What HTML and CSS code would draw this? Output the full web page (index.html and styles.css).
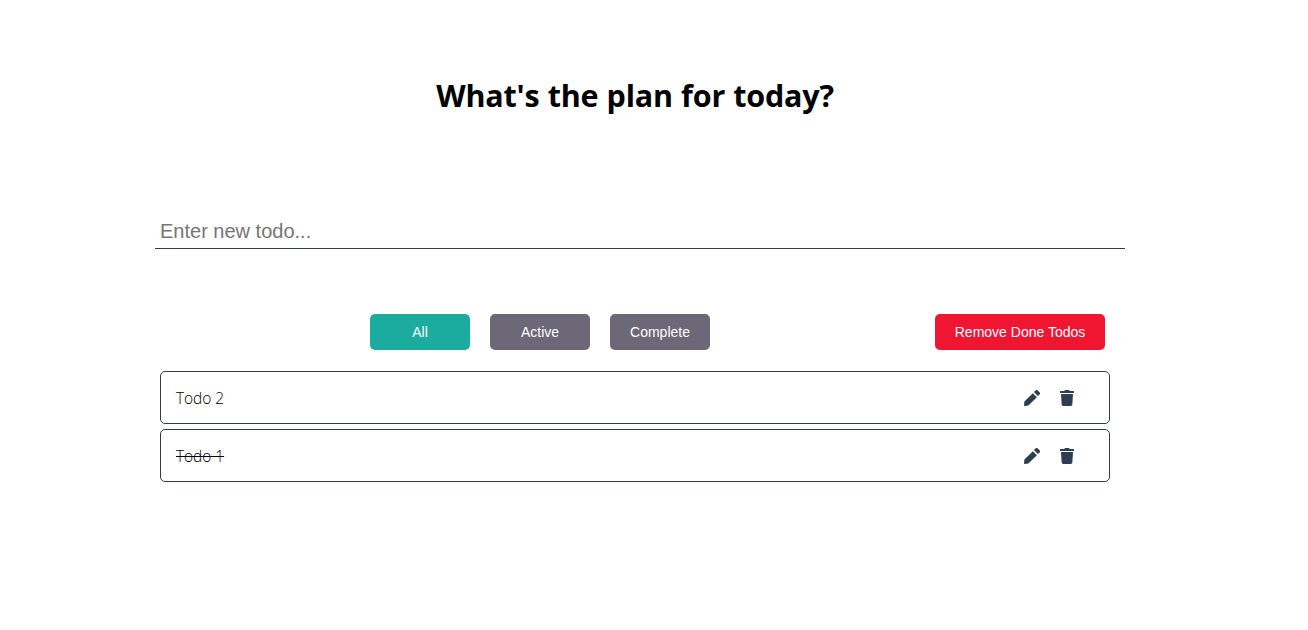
FILE: index.html
```html
<!DOCTYPE html>
<html lang="en">
<head>
<meta charset="utf-8">
<title>Todo List</title>
<link rel="stylesheet" href="styles.css">
</head>
<body>
<svg class="sprite" aria-hidden="true">
  <symbol id="pen" viewBox="0 0 512 512"><path d="M284 100l128 128-271.230 271.260-114.140 12.600C11.350 513.540-1.560 500.620.140 485.340l12.700-114.220zM497.940 74.180l-60.110-60.110c-18.750-18.750-49.160-18.750-67.910 0l-53 53 128.020 128.020 53-53c18.750-18.760 18.750-49.160 0-67.910z"/></symbol>
  <symbol id="trash" viewBox="0 0 448 512"><path d="M432 32H312l-9.4-18.7A24 24 0 0 0 281.1 0H166.8a23.72 23.72 0 0 0-21.4 13.3L136 32H16A16 16 0 0 0 0 48v32a16 16 0 0 0 16 16h416a16 16 0 0 0 16-16V48a16 16 0 0 0-16-16zM53.2 467a48 48 0 0 0 47.9 45h245.8a48 48 0 0 0 47.9-45L416 128H32z"/></symbol>
</svg>
<main class="app">
  <h1 class="title">What's the plan for today?</h1>
  <input class="todo-input" type="text" placeholder="Enter new todo...">
  <div class="toolbar">
    <div class="filters">
      <button class="btn btn-active">All</button>
      <button class="btn">Active</button>
      <button class="btn">Complete</button>
    </div>
    <button class="btn btn-remove">Remove Done Todos</button>
  </div>
  <ul class="todos">
    <li class="todo"><span class="todo-text">Todo 2</span><span class="actions"><svg class="icon"><use href="#pen"/></svg><svg class="icon"><use href="#trash"/></svg></span></li>
    <li class="todo"><span class="todo-text done">Todo 1</span><span class="actions"><svg class="icon"><use href="#pen"/></svg><svg class="icon"><use href="#trash"/></svg></span></li>
  </ul>
</main>
</body>
</html>
```
FILE: styles.css
```css
* { box-sizing: border-box; }
body { margin: 0; background: #fff; font-family: "Open Sans", "Noto Sans", sans-serif; }
.sprite { display: none; }
.app { width: 970px; margin-left: 155px; padding-top: 73px; }
.title { width: 960px; margin: 0; font-size: 30.5px; line-height: 44px; font-weight: 700; text-align: center; letter-spacing: -0.2px; word-spacing: 0.5px; color: #000; }
.todo-input { display: block; width: 100%; height: 36px; margin-top: 96px; padding: 2px 5px 0; border: 0; border-bottom: 1px solid #2c3e50; outline: 0; background: none; font: 20px "Liberation Sans", Arial, sans-serif; }
.todo-input::placeholder { color: #757575; }
.toolbar { display: flex; justify-content: space-between; margin-top: 65px; padding: 0 20px 0 215px; }
.filters { display: flex; gap: 20px; }
.btn { width: 100px; height: 36px; padding: 0; border: 0; border-radius: 5px; background: #6c6878; color: #fff; font: 14px "Liberation Sans", Arial, sans-serif; }
.btn-active { background: #1cac9f; }
.btn-remove { width: 170px; background: #f01530; }
.todos { display: flex; flex-direction: column; gap: 5px; width: 950px; margin: 21px 0 0 5px; padding: 0; list-style: none; }
.todo { display: flex; align-items: center; justify-content: space-between; height: 53px; padding: 0 34px 0 15px; border: 1px solid #2c3e50; border-radius: 5px; }
.todo-text { font-size: 15.5px; font-weight: 300; line-height: 22px; letter-spacing: -0.05px; color: #000; }
.done { text-decoration: line-through #000; }
.actions { display: flex; gap: 19px; }
.icon { width: 16px; height: 16px; fill: #2c3e50; }
```
